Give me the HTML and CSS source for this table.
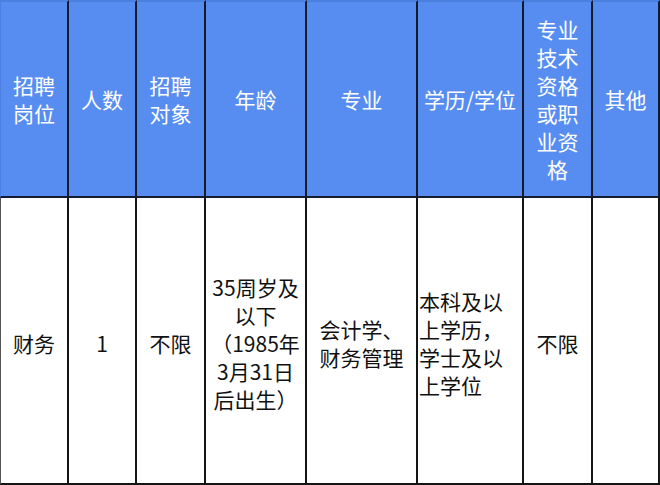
FILE: index.html
```html
<!DOCTYPE html>
<html lang="zh-CN">
<head>
<meta charset="utf-8">
<title>招聘岗位</title>
<link rel="stylesheet" href="styles.css">
</head>
<body>
<div class="table">
  <div class="cell head first">招聘岗位</div>
  <div class="cell head">人数</div>
  <div class="cell head">招聘对象</div>
  <div class="cell head">年龄</div>
  <div class="cell head">专业</div>
  <div class="cell head nowrap">学历/学位</div>
  <div class="cell head">专业技术资格或职业资格</div>
  <div class="cell head">其他</div>

  <div class="cell body first">财务</div>
  <div class="cell body">1</div>
  <div class="cell body">不限</div>
  <div class="cell body nowrap tight">35周岁及<br>以下<br>（1985年<br>3月31日<br>后出生）</div>
  <div class="cell body">会计学、财务管理</div>
  <div class="cell body left">本科及以上学历，学士及以上学位</div>
  <div class="cell body">不限</div>
  <div class="cell body"></div>
</div>
</body>
</html>
```

FILE: styles.css
```css
html, body {
  margin: 0;
  padding: 0;
  background: #ffffff;
}

.table {
  display: grid;
  grid-template-columns: 69px 68px 69px 101px 111px 106px 69px 67px;
  grid-template-rows: 198px 287px;
  width: 660px;
  font-family: "Noto Sans CJK SC", "Microsoft YaHei", sans-serif;
  font-size: 21px;
  line-height: 28px;
  text-spacing-trim: space-all;
}

.cell {
  box-sizing: border-box;
  display: flex;
  align-items: center;
  justify-content: center;
  text-align: center;
  padding: 0 4px;
  border-right: 2px solid #151515;
  border-bottom: 2px solid #151515;
}

.head {
  background: #578df0;
  color: #ffffff;
  border-top: 2px solid #4c80e0;
  border-right-color: #141a2c;
  border-bottom-color: #161c30;
}

.body {
  background: #ffffff;
  color: #111111;
  padding-top: 4px;
}

.nowrap {
  white-space: nowrap;
}

.tight {
  padding-left: 0;
  padding-right: 0;
}

.first {
  border-left: 1px solid #555555;
}

.head.first {
  border-left-color: #4c80e0;
}

.left {
  justify-content: flex-start;
  text-align: left;
  padding-left: 1px;
  padding-right: 2px;
}
```
